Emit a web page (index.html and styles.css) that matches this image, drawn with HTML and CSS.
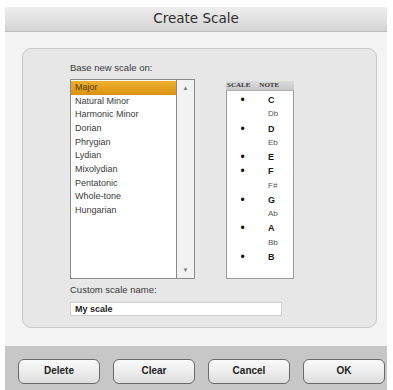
FILE: index.html
```html
<!DOCTYPE html>
<html>
<head>
<meta charset="utf-8">
<link rel="stylesheet" href="styles.css">
</head>
<body>
<div class="window">
  <div class="titlebar">Create Scale</div>
  <div class="content">
    <div class="panel">
      <div class="row">
        <div class="left">
          <div class="label">Base new scale on:</div>
          <div class="listbox">
            <div class="items">
              <div class="item selected">Major</div>
              <div class="item">Natural Minor</div>
              <div class="item">Harmonic Minor</div>
              <div class="item">Dorian</div>
              <div class="item">Phrygian</div>
              <div class="item">Lydian</div>
              <div class="item">Mixolydian</div>
              <div class="item">Pentatonic</div>
              <div class="item">Whole-tone</div>
              <div class="item">Hungarian</div>
            </div>
            <div class="scrollbar">
              <span class="arrow up">▲</span>
              <span class="arrow down">▼</span>
            </div>
          </div>
        </div>
        <div class="tablecol">
          <div class="thead"><span>SCALE</span><span>NOTE</span></div>
          <div class="tbody">
            <div class="nrow"><span class="dot">•</span><span class="note nat">C</span></div>
            <div class="nrow"><span class="dot"></span><span class="note">Db</span></div>
            <div class="nrow"><span class="dot">•</span><span class="note nat">D</span></div>
            <div class="nrow"><span class="dot"></span><span class="note">Eb</span></div>
            <div class="nrow"><span class="dot">•</span><span class="note nat">E</span></div>
            <div class="nrow"><span class="dot">•</span><span class="note nat">F</span></div>
            <div class="nrow"><span class="dot"></span><span class="note">F#</span></div>
            <div class="nrow"><span class="dot">•</span><span class="note nat">G</span></div>
            <div class="nrow"><span class="dot"></span><span class="note">Ab</span></div>
            <div class="nrow"><span class="dot">•</span><span class="note nat">A</span></div>
            <div class="nrow"><span class="dot"></span><span class="note">Bb</span></div>
            <div class="nrow"><span class="dot">•</span><span class="note nat">B</span></div>
          </div>
        </div>
      </div>
      <div class="label custom">Custom scale name:</div>
      <div class="input">My scale</div>
    </div>
  </div>
  <div class="buttonbar">
    <div class="btn">Delete</div>
    <div class="btn">Clear</div>
    <div class="btn">Cancel</div>
    <div class="btn">OK</div>
  </div>
</div>
</body>
</html>
```
FILE: styles.css
```css
html, body {
  margin: 0;
  padding: 0;
  background: #ffffff;
}
body {
  padding: 7px 6px 0 5px;
  height: 390px;
  box-sizing: border-box;
  overflow: hidden;
  font-family: "Liberation Sans", Arial, sans-serif;
}
.window {
  display: flex;
  flex-direction: column;
  height: 383px;
  background: #f4f4f4;
}
.titlebar {
  height: 25px;
  line-height: 23px;
  text-align: center;
  font-family: "DejaVu Sans", sans-serif;
  font-size: 13.5px;
  color: #2e2e2e;
  background: linear-gradient(#eeeeee, #d4d4d4);
  border-bottom: 1px solid #bdbdbd;
  box-sizing: border-box;
}
.content {
  flex: 1;
  padding: 16px 10px 0 17px;
}
.panel {
  height: 280px;
  box-sizing: border-box;
  background: #e7e7e7;
  border: 1px solid #c9c9c9;
  border-radius: 9px;
  padding: 13px 0 0 47px;
}
.row {
  display: flex;
}
.left {
  width: 125px;
}
.label {
  font-size: 9.5px;
  line-height: 12px;
  color: #3a3a3a;
  height: 12px;
  margin-bottom: 5px;
}
.listbox {
  display: flex;
  height: 200px;
  border: 1px solid #8a8a8a;
  box-sizing: border-box;
  background: #ffffff;
}
.items {
  flex: 1;
  padding-top: 1px;
  border-right: 1px solid #8a8a8a;
}
.item {
  height: 13.67px;
  line-height: 13.67px;
  font-size: 9px;
  color: #3a3a3a;
  padding-left: 4px;
}
.item.selected {
  background: linear-gradient(#f0b030, #d8920e);
  color: #5a3a00;
}
.scrollbar {
  width: 17px;
  background: #f2f2f2;
  display: flex;
  flex-direction: column;
  justify-content: space-between;
  align-items: center;
  padding: 4px 0 4px;
}
.arrow {
  font-size: 6px;
  color: #777;
  line-height: 8px;
}
.tablecol {
  margin-left: 31px;
  padding-top: 19px;
  width: 68px;
}
.thead {
  height: 9px;
  background: linear-gradient(#dcdcdc, #c8c8c8);
  display: flex;
  font-family: "Liberation Serif", serif;
  font-weight: bold;
  font-size: 7px;
  line-height: 9px;
  color: #333;
  padding-left: 1px;
  gap: 9px;
}
.tbody {
  height: 189px;
  box-sizing: border-box;
  background: #ffffff;
  border: 1px solid #9a9a9a;
  border-top: 1px solid #b0b0b0;
  padding-top: 2px;
}
.nrow {
  height: 14.27px;
  line-height: 14.27px;
  display: flex;
}
.dot {
  width: 31px;
  text-align: center;
  font-size: 12px;
  color: #111;
}
.note {
  font-size: 8px;
  color: #555;
  padding-left: 10px;
}
.note.nat {
  font-size: 9px;
  font-weight: bold;
  color: #1a1a1a;
}
.custom {
  margin-top: 5px;
  margin-bottom: 6px;
}
.input {
  width: 212px;
  height: 14px;
  box-sizing: border-box;
  background: #ffffff;
  border: 1px solid #d0d0d0;
  font-size: 9px;
  font-weight: bold;
  line-height: 12px;
  padding-left: 4px;
  color: #222;
}
.buttonbar {
  height: 44px;
  margin-top: 18px;
  background: #c7c7c7;
  display: flex;
  gap: 13px;
  padding: 13px 0 0 13px;
  box-sizing: border-box;
}
.btn {
  width: 82px;
  height: 25px;
  box-sizing: border-box;
  border: 1.5px solid #6a6a6a;
  border-radius: 6px;
  background: linear-gradient(#fbfbfb, #dedede);
  text-align: center;
  line-height: 22px;
  font-size: 10px;
  font-weight: bold;
  color: #222;
}
```
